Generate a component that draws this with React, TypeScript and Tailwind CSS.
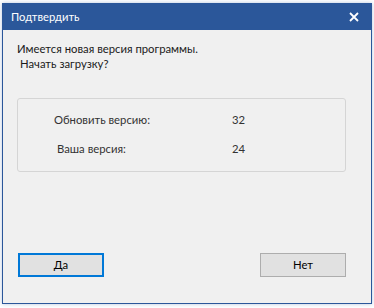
import React from "react";

export default function App() {
  const font = { fontFamily: 'Lato, "Noto Sans", sans-serif' };
  return (
    <div className="w-[374px] h-[308px] bg-white pt-[3px] pl-[2px]" style={font}>
      <div className="w-[370px] h-[301px] border border-[#2b579a] bg-[#f0f0f0] flex flex-col shadow-[0_0_4px_rgba(43,87,154,0.35)]">
        <div className="h-[26px] bg-[#2b579a] flex items-center justify-between pl-[8px] pr-[12px] text-white">
          <span className="text-[11.2px] leading-none">Подтвердить</span>
          <svg width="10" height="10" viewBox="0 0 10 10">
            <path d="M1 1L9 9M9 1L1 9" stroke="white" strokeWidth="1.8" />
          </svg>
        </div>
        <div className="flex flex-col pl-[14px] pt-[11px] text-[11.3px] text-[#1a1a1a] leading-[15px]">
          <span>Имеется новая версия программы.</span>
          <span className="pl-[3px]">Начать загрузку?</span>
        </div>
        <div className="ml-[14px] mt-[27px] w-[329px] h-[74px] border border-[#d5d5d5] rounded-[3px] text-[11.3px] text-[#333] flex flex-col pt-[13px] gap-[14px] leading-[15px]">
          <div className="flex">
            <span className="pl-[36px] w-[214px]">Обновить версию:</span>
            <span>32</span>
          </div>
          <div className="flex">
            <span className="pl-[39px] w-[214px]">Ваша версия:</span>
            <span>24</span>
          </div>
        </div>
        <div className="flex justify-between ml-[15px] mr-[25px] mt-[81px]">
          <button className="w-[86px] h-[24px] bg-[#e1e1e1] border-2 border-[#0078d7] text-[11.3px] text-black">Да</button>
          <button className="w-[86px] h-[24px] bg-[#e1e1e1] border border-[#adadad] text-[11.3px] text-black">Нет</button>
        </div>
      </div>
    </div>
  );
}
